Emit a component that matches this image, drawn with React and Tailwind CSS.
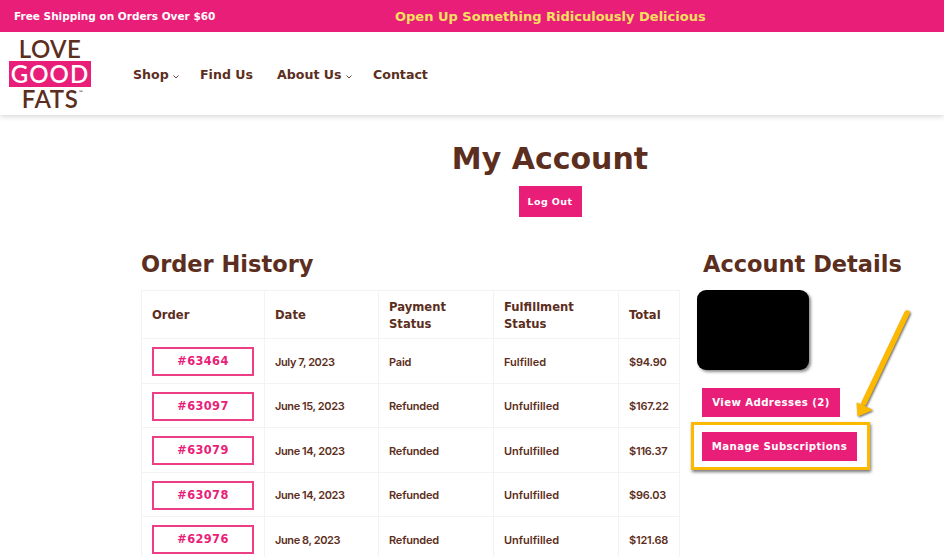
import React from "react"

const wide = "font-['DejaVu_Sans',sans-serif] font-bold"

const orders = [
  { id: "#63464", date: "July 7, 2023", payment: "Paid", status: "Fulfilled", total: "$94.90" },
  { id: "#63097", date: "June 15, 2023", payment: "Refunded", status: "Unfulfilled", total: "$167.22" },
  { id: "#63079", date: "June 14, 2023", payment: "Refunded", status: "Unfulfilled", total: "$116.37" },
  { id: "#63078", date: "June 14, 2023", payment: "Refunded", status: "Unfulfilled", total: "$96.03" },
  { id: "#62976", date: "June 8, 2023", payment: "Refunded", status: "Unfulfilled", total: "$121.68" },
]

const Chevron = () => (
  <svg width="6" height="4" viewBox="0 0 6 4" className="mt-[3px]" fill="none" stroke="#5c2e20" strokeWidth="0.9">
    <path d="M0.5 0.5 L3 3 L5.5 0.5" />
  </svg>
)

const Logo = () => (
  <div className="w-[82px] flex flex-col items-center font-['Lato',sans-serif] font-semibold text-[#5c2e20] text-[24px]">
    <span className="h-[20px] leading-[20px] tracking-[0.4px]">LOVE</span>
    <span className="w-full h-[26px] mt-[2px] bg-[#e91e78] text-white text-center leading-[26px] tracking-[1px] whitespace-nowrap">GOOD</span>
    <span className="h-[20px] leading-[20px] mt-[2px] tracking-[0.6px] relative">
      FATS
      <span className="absolute -right-[5px] top-[0px] text-[5px] leading-[6px]">™</span>
    </span>
  </div>
)

const Button = ({ children, className = "" }) => (
  <div className={`bg-[#e91e78] text-white flex items-center justify-center ${wide} tracking-[0.4px] ${className}`}>
    <span className="pt-[1px]">{children}</span>
  </div>
)

const th = `border border-[#f3f3f3] px-[10px] pt-[2px] text-left align-middle text-[11.6px] leading-[17px] text-[#5c2e20] ${wide}`
const td = "border border-[#f3f3f3] px-[10px] pt-[2px] text-[11px] font-semibold text-[#5c2e20] font-['Inter',sans-serif]"

export default function App() {
  return (
    <div className="w-[944px] h-[557px] overflow-hidden bg-white relative">
      <div className="h-[32px] pt-[2px] bg-[#e91e78] flex items-center relative">
        <span className={`ml-[14px] w-[381px] text-white text-[10.5px] ${wide}`}>Free Shipping on Orders Over $60</span>
        <span className={`text-[#f6e05e] text-[13px] ${wide}`}>Open Up Something Ridiculously Delicious</span>
      </div>
      <div className="h-[83px] flex items-center pl-[9px] shadow-[0_2px_5px_rgba(0,0,0,0.15)]">
        <Logo />
        <nav className={`ml-[42px] mt-[4px] flex items-center text-[12.6px] text-[#5c2e20] ${wide}`}>
          <span className="w-[40px]">Shop</span>
          <Chevron />
          <span className="ml-[21px] w-[77px]">Find Us</span>
          <span className="w-[69px]">About Us</span>
          <Chevron />
          <span className="ml-[21px]">Contact</span>
        </nav>
      </div>

      <div className="pl-[156px] flex flex-col items-center pt-[25px]">
        <h1 className={`text-[30px] leading-[38px] text-[#5c2e20] ${wide}`}>My Account</h1>
        <Button className="w-[63px] h-[31px] mt-[8px] text-[9.5px]">Log Out</Button>
      </div>

      <div className="flex pl-[141px] pt-[32px]">
        <div className="w-[538px]">
          <h2 className={`text-[22.5px] leading-[30px] text-[#5c2e20] ${wide}`}>Order History</h2>
          <table className="mt-[11px] w-[538px] table-fixed border-collapse">
            <colgroup>
              <col className="w-[123px]" />
              <col className="w-[114px]" />
              <col className="w-[115px]" />
              <col className="w-[125px]" />
              <col className="w-[61px]" />
            </colgroup>
            <thead>
              <tr className="h-[48px]">
                <th className={th}>Order</th>
                <th className={th}>Date</th>
                <th className={th}>Payment Status</th>
                <th className={th}>Fulfillment Status</th>
                <th className={th}>Total</th>
              </tr>
            </thead>
            <tbody>
              {orders.map((order) => (
                <tr key={order.id} className="h-[44.5px]">
                  <td className={td}>
                    <div className={`w-[102px] h-[29px] border-2 border-[#ee3f86] flex items-center justify-center text-[#e91e78] text-[11.4px] tracking-[0.4px] ${wide}`}>
                      {order.id}
                    </div>
                  </td>
                  <td className={`${td} tracking-[-0.4px]`}>{order.date}</td>
                  <td className={`${td} tracking-[-0.2px]`}>{order.payment}</td>
                  <td className={td}>{order.status}</td>
                  <td className={`${td} tracking-[-0.2px]`}>{order.total}</td>
                </tr>
              ))}
            </tbody>
          </table>
        </div>
        <div className="ml-[12px] flex flex-col items-start">
          <h2 className={`ml-[12px] text-[22.5px] leading-[30px] whitespace-nowrap text-[#5c2e20] ${wide}`}>Account Details</h2>
          <div className="ml-[6px] mt-[11px] w-[112px] h-[80px] bg-black rounded-[9px] shadow-[2px_2px_3px_rgba(0,0,0,0.45)]" />
          <Button className="ml-[11px] mt-[18px] w-[138px] h-[29px] text-[10.2px]">View Addresses (2)</Button>
          <div className="mt-[5px] w-[179px] h-[48px] border-[3px] border-[#fdb900] flex items-center pl-[8px] shadow-[1px_2px_3px_rgba(0,0,0,0.55)]">
            <Button className="w-[155px] h-[29px] text-[10.2px]">Manage Subscriptions</Button>
          </div>
        </div>
      </div>

      <svg className="absolute left-[850px] top-[305px]" width="70" height="115" viewBox="0 0 70 115" fill="none">
        <g filter="drop-shadow(1.5px 1.5px 1px rgba(0,0,0,0.6))">
          <path d="M57 8 L14 98" stroke="#fdb900" strokeWidth="5.5" strokeLinecap="round" />
          <path d="M7 98 L22 105 L8 111 Z" fill="#fdb900" stroke="#fdb900" strokeWidth="1" />
        </g>
      </svg>
    </div>
  )
}
